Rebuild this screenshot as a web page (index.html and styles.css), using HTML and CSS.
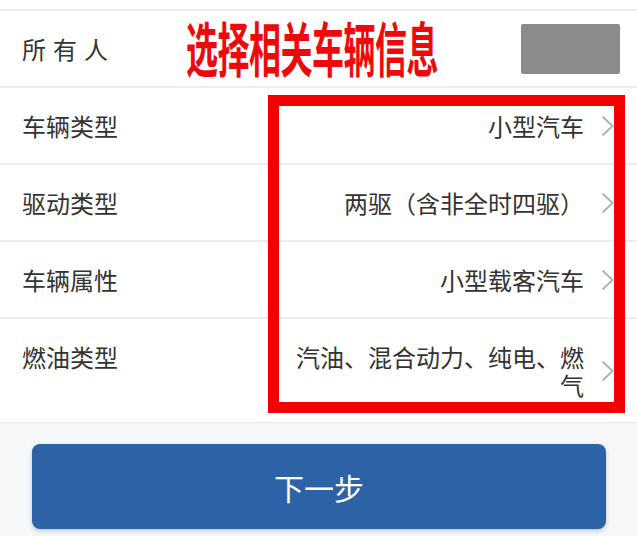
FILE: index.html
```html
<!DOCTYPE html>
<html lang="zh">
<head>
<meta charset="utf-8">
<link rel="stylesheet" href="styles.css">
</head>
<body>
<div class="page">
  <div class="list">
    <div class="row row-owner">
      <span class="label label-spaced">所有人</span>
      <span class="redacted"></span>
    </div>
    <div class="row">
      <span class="label">车辆类型</span>
      <span class="value">小型汽车</span>
      <svg class="chev" width="13" height="22" viewBox="0 0 13 22"><polyline points="1.5,1.5 11.5,11 1.5,20.5" fill="none" stroke="#b3b3b3" stroke-width="2"/></svg>
    </div>
    <div class="row">
      <span class="label">驱动类型</span>
      <span class="value">两驱（含非全时四驱）</span>
      <svg class="chev" width="13" height="22" viewBox="0 0 13 22"><polyline points="1.5,1.5 11.5,11 1.5,20.5" fill="none" stroke="#b3b3b3" stroke-width="2"/></svg>
    </div>
    <div class="row">
      <span class="label">车辆属性</span>
      <span class="value">小型载客汽车</span>
      <svg class="chev" width="13" height="22" viewBox="0 0 13 22"><polyline points="1.5,1.5 11.5,11 1.5,20.5" fill="none" stroke="#b3b3b3" stroke-width="2"/></svg>
    </div>
    <div class="row">
      <span class="label">燃油类型</span>
      <span class="value">汽油、混合动力、纯电、燃气</span>
      <svg class="chev" width="13" height="22" viewBox="0 0 13 22"><polyline points="1.5,1.5 11.5,11 1.5,20.5" fill="none" stroke="#b3b3b3" stroke-width="2"/></svg>
    </div>
  </div>
  <div class="footer">
    <button class="next">下一步</button>
  </div>
  <div class="annot-title">选择相关车辆信息</div>
  <div class="annot-box"></div>
</div>
</body>
</html>
```
FILE: styles.css
```css
* { box-sizing: border-box; }
html, body { margin: 0; padding: 0; }
body {
  width: 637px;
  height: 536px;
  overflow: hidden;
  background: #f5f7f9;
  font-family: "Noto Sans CJK SC", "Noto Sans", sans-serif;
  color: #333;
}
.page {
  position: relative;
  width: 637px;
  height: 536px;
}
.list {
  background: #fff;
  padding-top: 9px;
  border-bottom: 1px solid #e8e8e8;
}
.row {
  display: flex;
  align-items: flex-start;
  padding: 24px 23px 23px 22px;
  border-top: 2px solid #ececec;
  font-size: 24px;
  line-height: 28px;
}
.row-owner {
  padding: 12px 17px 12px 22px;
  align-items: center;
  height: 77px;
}
.label { flex: none; }
.label-spaced { letter-spacing: 7px; }
.redacted {
  margin-left: auto;
  width: 99px;
  height: 50px;
  background: #8b8b8b;
  border-radius: 2px;
}
.value {
  margin-left: auto;
  max-width: 296px;
  text-align: right;
}
.chev {
  flex: none;
  align-self: center;
  margin-left: 17px;
}
.footer {
  padding: 21px 31px 0 32px;
}
.next {
  display: block;
  width: 574px;
  height: 85px;
  border: none;
  border-radius: 8px;
  background: #2d63a6;
  color: #fff;
  font-family: "Noto Sans CJK SC", sans-serif;
  font-size: 30px;
  box-shadow: 0 2px 4px rgba(40, 70, 120, 0.25);
}
.annot-title {
  position: absolute;
  left: 186px;
  top: 20px;
  width: 256px;
  height: 52px;
  line-height: 52px;
  font-size: 32px;
  font-weight: 700;
  color: #ee0a0a;
  letter-spacing: -0.5px;
  transform: scaleY(1.85);
  transform-origin: center;
  white-space: nowrap;
}
.annot-box {
  position: absolute;
  left: 268px;
  top: 95px;
  width: 357px;
  height: 318px;
  border: 11px solid #f50000;
}
```
